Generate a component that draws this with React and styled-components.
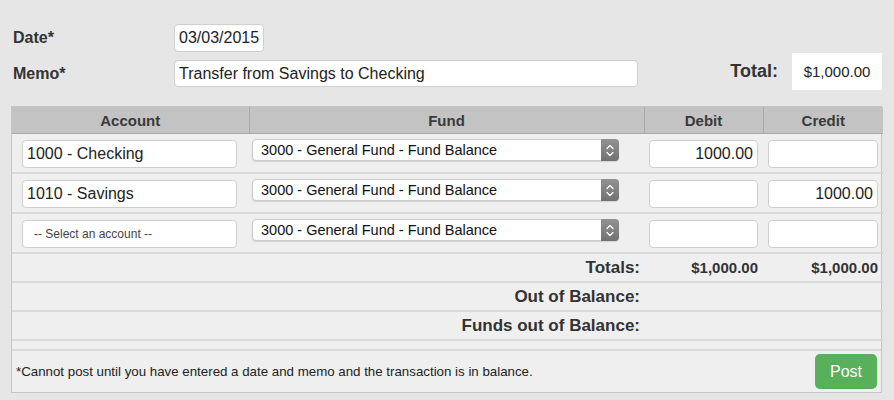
import React from 'react'
import styled, { createGlobalStyle } from 'styled-components'

const GlobalStyle = createGlobalStyle`
  html, body {
    margin: 0;
    background: #e6e6e6;
    font-family: "Liberation Sans", Arial, sans-serif;
    color: #333;
  }
`

const Page = styled.div`
  width: 894px;
  height: 400px;
  padding: 24px 12px 0 11px;
  box-sizing: border-box;
`

const TopArea = styled.div`
  display: flex;
  justify-content: space-between;
  align-items: flex-end;
  margin-bottom: 19px;
`

const Fields = styled.div`
  display: grid;
  grid-template-columns: 161px auto;
  row-gap: 8px;
  align-items: center;
  padding-left: 2px;
`

const Label = styled.label`
  font-size: 16px;
  font-weight: bold;
  color: #333;
`

const TextInput = styled.input`
  box-sizing: border-box;
  width: ${p => p.$width || '100%'};
  height: ${p => p.$height || 28}px;
  border: 1px solid #cfcfcf;
  border-radius: 4px;
  background: #fff;
  padding: 0 4px;
  font-family: "Liberation Sans", Arial, sans-serif;
  font-size: ${p => p.$size || 16}px;
  color: #222;
  text-align: ${p => p.$align || 'left'};
  outline: none;
  &::placeholder {
    color: #444;
  }
`

const TotalBox = styled.div`
  display: flex;
  align-items: center;
  gap: 14px;
  margin-bottom: -3px;
`

const TotalLabel = styled.span`
  font-size: 18px;
  font-weight: bold;
  color: #333;
`

const TotalValue = styled.div`
  width: 90px;
  height: 37px;
  background: #fff;
  display: flex;
  align-items: center;
  justify-content: center;
  font-size: 15px;
  color: #222;
`

const Panel = styled.div`
  border: 1px solid #c4c4c4;
  background: #efefef;
`

const Table = styled.table`
  width: 100%;
  border-collapse: collapse;
  table-layout: fixed;
`

const Th = styled.th`
  height: 26px;
  padding: 0;
  background: #c3c3c3;
  border-bottom: 1px solid #aaaaaa;
  border-left: 1px solid #aaaaaa;
  font-size: 15px;
  font-weight: bold;
  color: #3a3a3a;
  text-align: center;
  &:first-child {
    border-left: none;
  }
`

const Row = styled.tr`
  border-bottom: 2px solid #d9d9d9;
`

const Td = styled.td`
  padding: ${p => p.$pad || '6px 5px 4px 5px'};
  vertical-align: top;
`

const SumLabel = styled.td`
  height: 27px;
  padding: 0 4px 0 0;
  text-align: right;
  font-size: 17px;
  font-weight: bold;
  color: #333;
`

const SumValue = styled.td`
  padding: 0 5px 0 0;
  text-align: right;
  font-size: 15px;
  font-weight: bold;
  color: #333;
`

const SelectWrap = styled.div`
  position: relative;
  height: 22px;
  margin-top: -1px;
  margin-right: 20px;
  margin-left: -1px;
  background: #fff;
  border: 1px solid #c9c9c9;
  border-radius: 4px;
  box-shadow: 0 1px 1px rgba(0, 0, 0, 0.12);
  box-sizing: border-box;
`

const Select = styled.select`
  appearance: none;
  width: 100%;
  height: 100%;
  border: none;
  background: transparent;
  padding: 0 0 0 8px;
  font-family: "Liberation Sans", Arial, sans-serif;
  font-size: 14.5px;
  color: #111;
  outline: none;
`

const Stepper = styled.span`
  position: absolute;
  top: -1px;
  right: -1px;
  bottom: -1px;
  width: 18px;
  border-radius: 0 4px 4px 0;
  background: linear-gradient(#929292, #727272);
  display: flex;
  align-items: center;
  justify-content: center;
  pointer-events: none;
`

const Footer = styled.div`
  border-top: 2px solid #d9d9d9;
  margin-top: 8px;
  height: 41px;
  padding: 0 4px;
  display: flex;
  align-items: center;
  justify-content: space-between;
`

const Note = styled.span`
  font-size: 13.3px;
  color: #222;
`

const PostButton = styled.button`
  width: 62px;
  height: 35px;
  border: none;
  border-radius: 5px;
  background: #58b05b;
  color: #fff;
  font-family: "Liberation Sans", Arial, sans-serif;
  font-size: 16px;
  cursor: pointer;
`

const FundSelect = () => (
  <SelectWrap>
    <Select defaultValue="3000">
      <option value="3000">3000 - General Fund - Fund Balance</option>
    </Select>
    <Stepper>
      <svg width="8" height="13" viewBox="0 0 8 13" fill="none" stroke="#fff" strokeWidth="1.3" strokeLinecap="round" strokeLinejoin="round">
        <path d="M1 4.5 L4 1.5 L7 4.5" />
        <path d="M1 8.5 L4 11.5 L7 8.5" />
      </svg>
    </Stepper>
  </SelectWrap>
)

const lines = [
  { account: '1000 - Checking', debit: '1000.00', credit: '' },
  { account: '1010 - Savings', debit: '', credit: '1000.00' },
  { account: '', debit: '', credit: '' },
]

export default function App() {
  return (
    <>
      <GlobalStyle />
      <Page>
        <TopArea>
          <Fields>
            <Label>Date*</Label>
            <TextInput $width="90px" defaultValue="03/03/2015" />
            <Label>Memo*</Label>
            <TextInput $width="464px" $height={27} defaultValue="Transfer from Savings to Checking" />
          </Fields>
          <TotalBox>
            <TotalLabel>Total:</TotalLabel>
            <TotalValue>$1,000.00</TotalValue>
          </TotalBox>
        </TopArea>
        <Panel>
          <Table>
            <colgroup>
              <col style={{ width: 237 }} />
              <col style={{ width: 395 }} />
              <col style={{ width: 119 }} />
              <col style={{ width: 120 }} />
            </colgroup>
            <thead>
              <tr>
                <Th>Account</Th>
                <Th>Fund</Th>
                <Th>Debit</Th>
                <Th>Credit</Th>
              </tr>
            </thead>
            <tbody>
              {lines.map((l, i) => (
                <Row key={i}>
                  <Td $pad="6px 12px 4px 10px">
                    {l.account
                      ? <TextInput defaultValue={l.account} />
                      : <TextInput $size={12} placeholder="-- Select an account --" style={{ paddingLeft: 11 }} />}
                  </Td>
                  <Td $pad="6px 5px 4px 4px"><FundSelect /></Td>
                  <Td><TextInput $align="right" defaultValue={l.debit} /></Td>
                  <Td><TextInput $align="right" defaultValue={l.credit} /></Td>
                </Row>
              ))}
              <Row>
                <SumLabel colSpan={2}>Totals:</SumLabel>
                <SumValue>$1,000.00</SumValue>
                <SumValue>$1,000.00</SumValue>
              </Row>
              <Row>
                <SumLabel colSpan={2}>Out of Balance:</SumLabel>
                <SumValue />
                <SumValue />
              </Row>
              <Row>
                <SumLabel colSpan={2}>Funds out of Balance:</SumLabel>
                <SumValue />
                <SumValue />
              </Row>
            </tbody>
          </Table>
          <Footer>
            <Note>*Cannot post until you have entered a date and memo and the transaction is in balance.</Note>
            <PostButton>Post</PostButton>
          </Footer>
        </Panel>
      </Page>
    </>
  )
}
